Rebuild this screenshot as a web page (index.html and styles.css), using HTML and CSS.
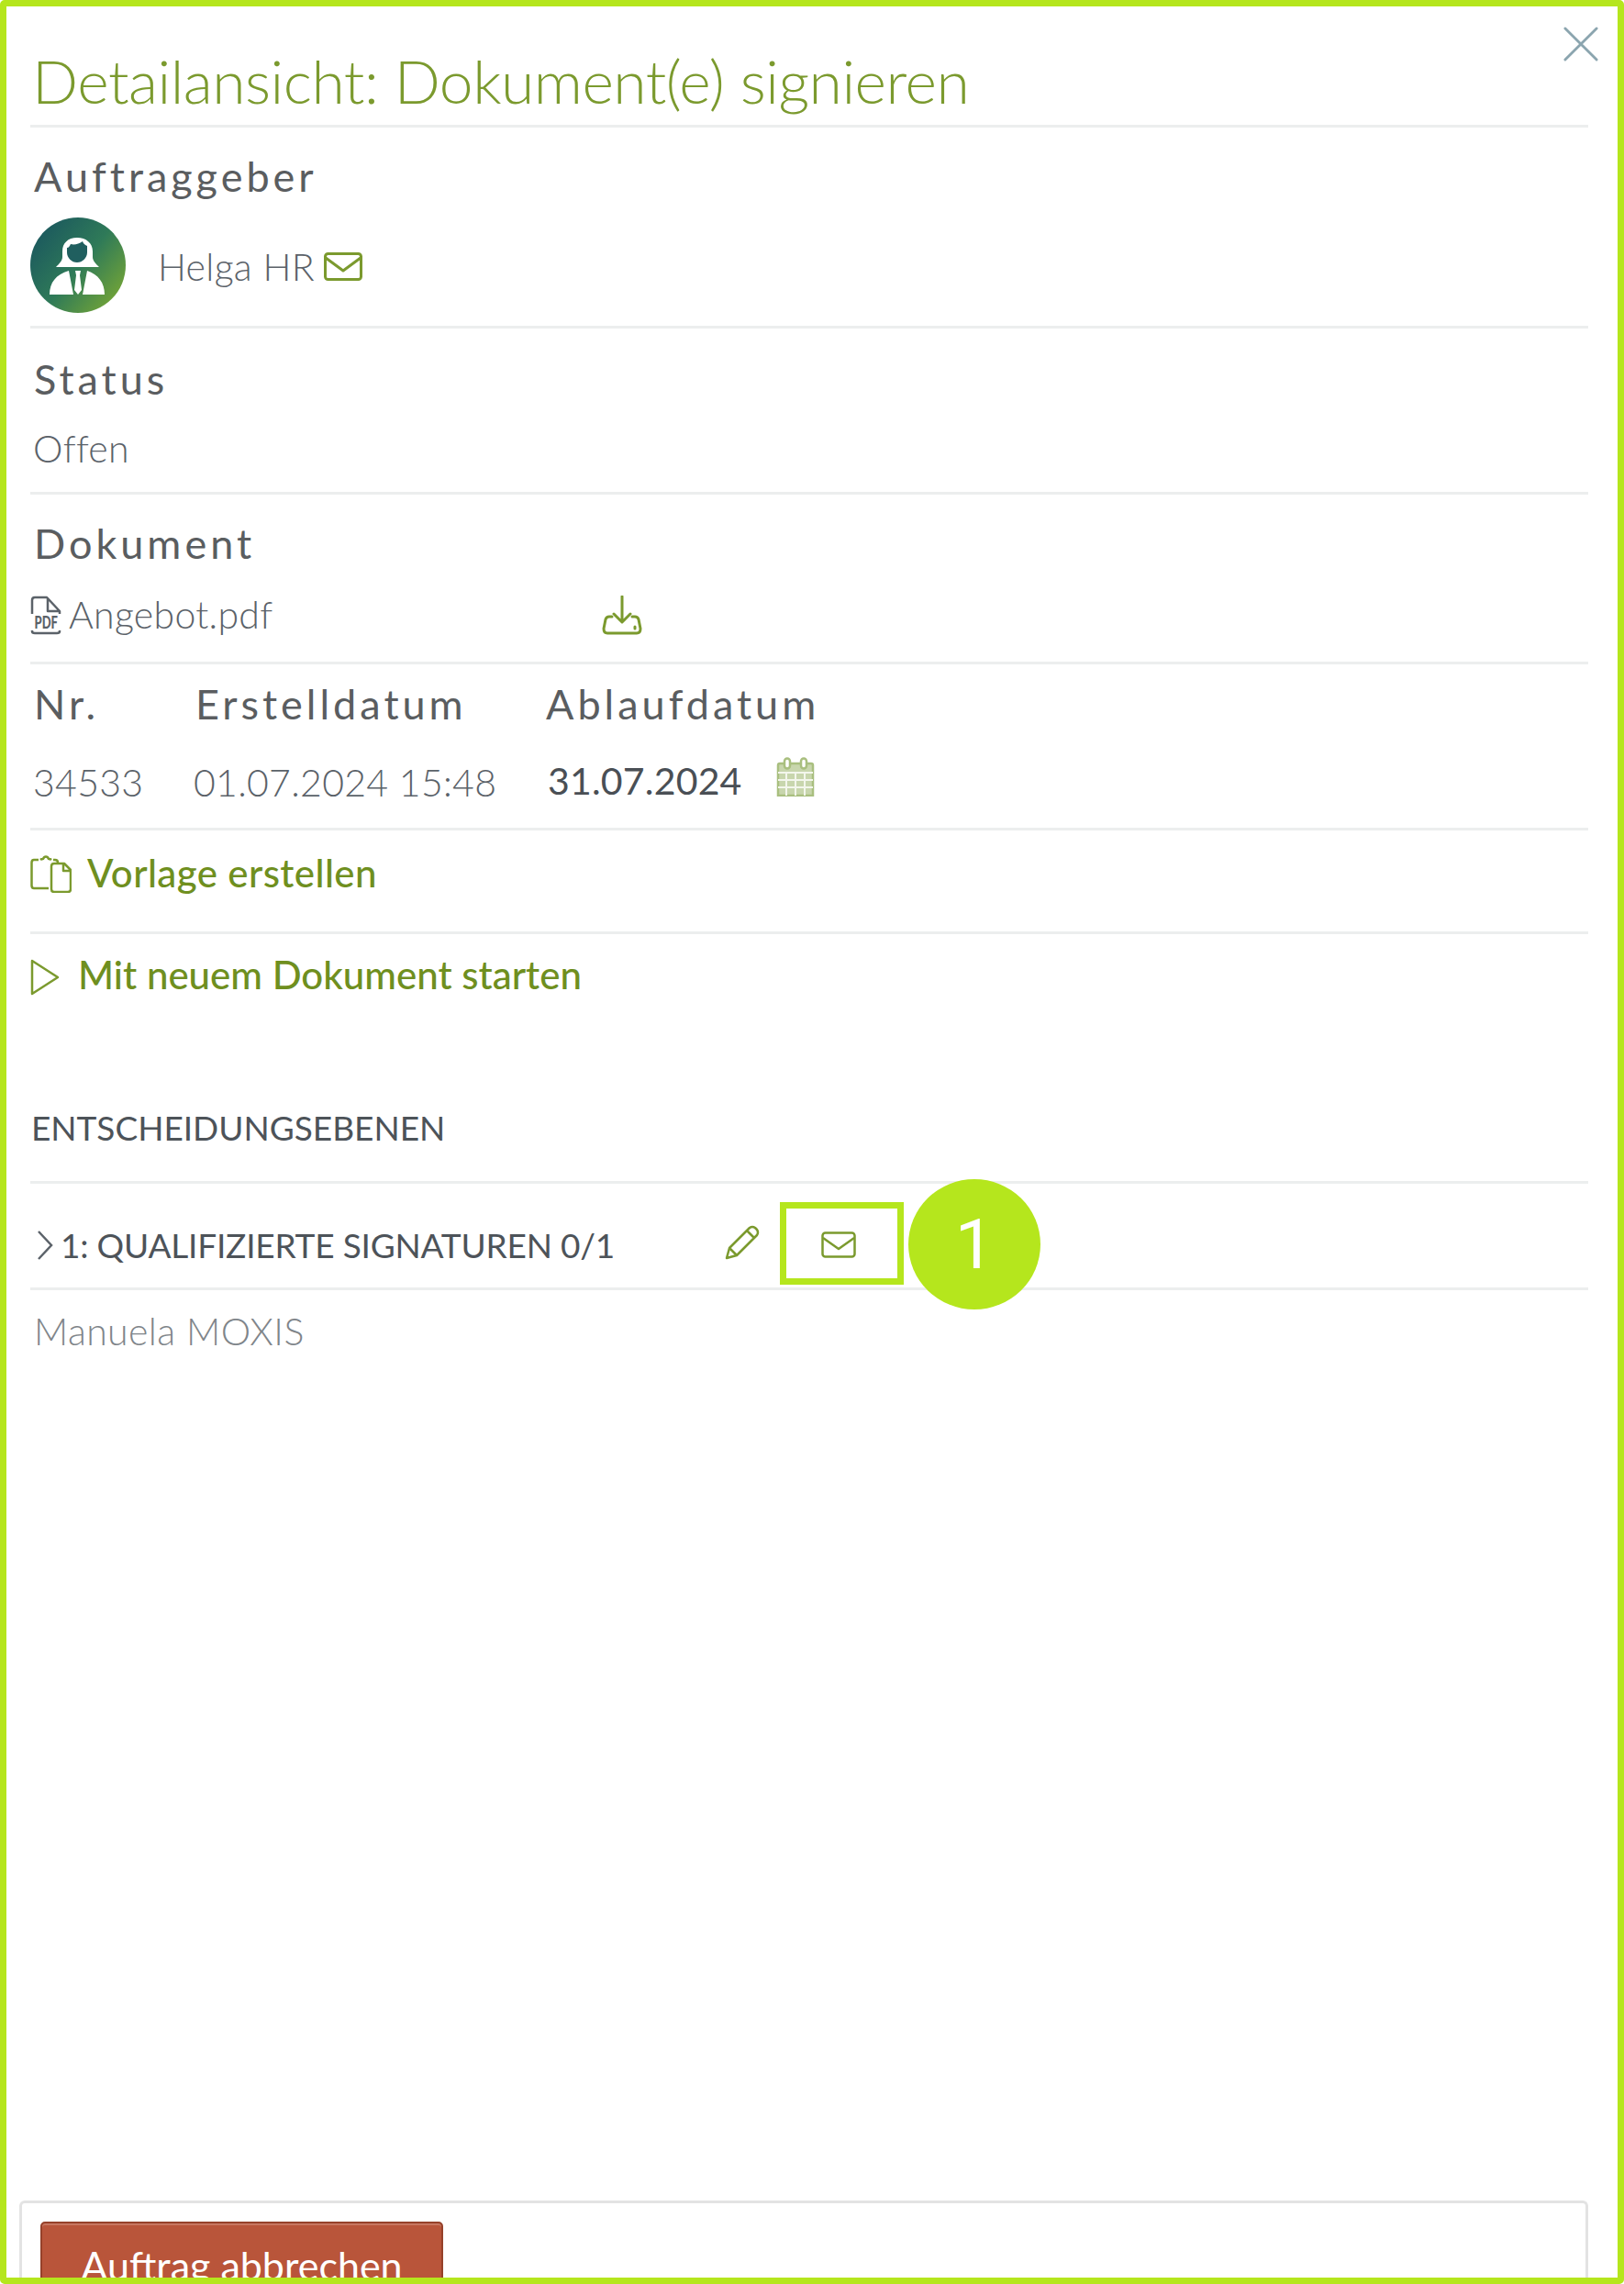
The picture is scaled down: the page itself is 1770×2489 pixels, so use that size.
FILE: index.html
```html
<!DOCTYPE html>
<html lang="de">
<head>
  <meta charset="UTF-8" />
  <title>Detailansicht: Dokument(e) signieren</title>
  <link rel="stylesheet" href="styles.css">
</head>
<body>
  <div class="panel">
    <svg class="close" viewBox="0 0 40 40"><path d="M2 2 38 38M38 2 2 38" /></svg>

    <section class="block title-block">
      <h1>Detailansicht: Dokument(e) signieren</h1>
    </section>

    <section class="block sender">
      <h2 class="label">Auftraggeber</h2>
      <div class="sender-row">
        <svg class="avatar" viewBox="0 0 104 104">
          <defs>
            <linearGradient id="avatarFill" x1="0.1" y1="0.15" x2="0.95" y2="0.85">
              <stop offset="0" stop-color="#1c5a5e" />
              <stop offset="0.5" stop-color="#2f7a58" />
              <stop offset="1" stop-color="#74a536" />
            </linearGradient>
          </defs>
          <circle cx="52" cy="52" r="52" fill="url(#avatarFill)" />
          <path fill="#fff" d="M51 22c-10 0-16 6-16 15v6c0 4-3 7-7 11h47c-4-4-7-7-7-11v-6c0-9-7-15-17-15z" />
          <path fill="#205f5f" d="M44 29c4 1 9 0 13-3 1 3 3 4 5 5v7c0 6-5 11-11 11s-11-5-11-11v-5c2 0 3-2 4-4z" />
          <path fill="#fff" d="M42 58 47 84H21c0-13 7-22 21-26zM62 58 57 84H81c0-13-7-22-19-26zM49 58h6l-1 5 2 16-4 5-4-5 2-16z" />
        </svg>
        <span class="person">Helga HR</span>
        <svg class="mail" viewBox="0 0 42 31"><rect x="1.5" y="1.5" width="39" height="28" rx="3" /><path d="M2 6 21 20 40 6" /></svg>
      </div>
    </section>

    <section class="block status">
      <h2 class="label">Status</h2>
      <p class="value">Offen</p>
    </section>

    <section class="block document">
      <h2 class="label">Dokument</h2>
      <div class="doc-row">
        <svg class="pdf" viewBox="0 0 34 43">
          <path class="pdf-line" d="M2 20V5q0-3 3-3h13l14 15v3M19 3v14h13M2 38v1q0 2 3 2h24q3 0 3-2v-1" />
          <text transform="translate(4.500 36) scale(1 1.4)" class="pdf-text">PDF</text>
        </svg>
        <span class="file">Angebot.pdf</span>
        <svg class="download" viewBox="0 0 44 43"><path d="M22 1V28M13 20l9 9 9-9M11 23H8q-3 0-4 3l-2 10q0 5 4 5h32q4 0 4-5l-2-10q-1-3-4-3h-3M36 34v2" /></svg>
      </div>
    </section>

    <section class="block meta">
      <h2 class="label">Nr.</h2>
      <h2 class="label">Erstelldatum</h2>
      <h2 class="label">Ablaufdatum</h2>
      <p class="value nr">34533</p>
      <p class="value created">01.07.2024 15:48</p>
      <div class="expiry">
        <span class="expiry-date">31.07.2024</span>
        <svg class="calendar" viewBox="0 0 42 43">
          <path class="cal-body" d="M2 9q0-2 2-2h34q2 0 2 2v33H2z" />
          <path class="cal-grid" d="M2 17H40M2 25H40M2 33H40M11 17V42M21 17V42M31 17V42" />
          <rect class="cal-ring" x="9" y="1.500" width="6" height="11" rx="3" />
          <rect class="cal-ring" x="27" y="1.500" width="6" height="11" rx="3" />
        </svg>
      </div>
    </section>

    <section class="block action-template">
      <a class="action">
        <svg class="copy-icon" viewBox="0 0 45 41">
          <path d="M9 5H4Q1.500 5 1.500 8V33q0 3 2.500 3H20M25 5h2q3 0 3 3M11 5q1-1 3-1 1-2.500 3-2.500t3 2.500q2 0 3 1" />
          <path d="M23 12q0-3 3-3H37L44 16V37q0 3-3 3H26q-3 0-3-3zM36 9v8h8" />
        </svg>
        Vorlage erstellen
      </a>
    </section>

    <section class="action-start">
      <a class="action">
        <svg class="play-icon" viewBox="0 0 32 40"><path d="M2 2 30 20 2 38z" /></svg>
        Mit neuem Dokument starten
      </a>
    </section>

    <section class="block levels">
      <h3>ENTSCHEIDUNGSEBENEN</h3>
    </section>

    <section class="block level-row">
      <svg class="chevron" viewBox="0 0 18 32"><path d="M2 1 16 16 2 31" /></svg>
      <span class="level-name">1: QUALIFIZIERTE SIGNATUREN 0/1</span>
      <svg class="pencil" viewBox="0 0 38 38"><path d="M2 36 5 25 27 3q3-2 6 0l2 2q2 3 0 6L13 33zM5 25l8 8M24 6l8 8" /></svg>
      <svg class="mail mail-small" viewBox="0 0 38 29"><rect x="1.500" y="1.500" width="35" height="26" rx="3" /><path d="M2 7 19 19 36 7" /></svg>
    </section>

    <p class="signer">Manuela MOXIS</p>

    <footer class="footer">
      <button class="cancel">Auftrag abbrechen</button>
    </footer>

    <div class="marker-box"></div>
    <div class="marker-badge">1</div>
  </div>
</body>
</html>
```

FILE: styles.css
```css
* { margin: 0; padding: 0; box-sizing: border-box; }
html, body { width: 1770px; height: 2489px; overflow: hidden; background: #fff; }
body { font-family: 'Lato', 'Liberation Sans', sans-serif; color: #4d5359; }

.panel {
  position: relative; display: flex; flex-direction: column;
  width: 1770px; height: 2489px; padding: 0 32px 0 26px;
  border: 7px solid #b5e61d; border-radius: 5px; overflow: hidden; background: #fff;
}
.block { border-bottom: 3px solid #eceeee; flex-shrink: 0; }

.close { position: absolute; top: 21px; right: 21px; width: 38px; height: 40px; fill: none; stroke: #8ba5af; stroke-width: 3; stroke-linecap: round; }

.title-block { height: 132px; padding: 46px 0 0 2px; }
h1 { font-size: 66px; line-height: 70px; font-weight: 300; color: #7b9a2e; white-space: nowrap; letter-spacing: -0.5px; }

.label { font-size: 45px; line-height: 50px; font-weight: 400; color: #5a5d60; letter-spacing: 4px; padding-left: 4px; white-space: nowrap; }
.value { font-size: 41px; line-height: 50px; font-weight: 300; letter-spacing: 0.3px; color: #5b6269; white-space: nowrap; }

.sender { padding: 28px 0 14px; }
.sender-row { display: flex; align-items: center; margin-top: 20px; }
.avatar { width: 104px; height: 104px; }
.person { font-size: 41px; line-height: 50px; font-weight: 300; letter-spacing: 0.3px; color: #5b6269; margin: 3px 0 0 35px; }
.mail { fill: none; stroke: #7b9a2e; stroke-width: 3; stroke-linejoin: round; width: 42px; height: 31px; margin: 2px 0 0 10px; }

.status { padding: 30px 0 22px; }
.status .value { margin-top: 26px; padding-left: 3px; }

.document { padding: 28px 0 27px; }
.doc-row { display: flex; align-items: center; margin-top: 27px; height: 50px; }
.pdf { width: 34px; height: 43px; margin-top: 3px; flex-shrink: 0; }
.pdf-line { fill: none; stroke: #5b6269; stroke-width: 2.500; stroke-linejoin: round; }
.pdf-text { font-size: 13px; font-weight: 900; fill: #5b6269; }
.file { font-size: 41px; font-weight: 300; letter-spacing: 0.3px; color: #5b6269; margin-left: 8px; width: 581px; white-space: nowrap; }
.download { width: 44px; height: 43px; fill: none; stroke: #7b9a2e; stroke-width: 3; stroke-linejoin: round; stroke-linecap: round; margin-top: 3px; }

.meta { display: grid; grid-template-columns: 176px 382px auto; padding: 18px 0 24px; row-gap: 36px; }
.nr { padding-left: 3px; }
.created { padding-left: 2px; }
.expiry { display: flex; align-items: center; height: 44px; padding-left: 6px; }
.expiry-date { font-size: 41px; font-weight: 400; letter-spacing: 0.2px; color: #4a4f55; white-space: nowrap; }
.calendar { width: 42px; height: 43px; margin: -7px 0 0 37px; flex-shrink: 0; }
.cal-body { fill: #c8d6ad; stroke: #a9bf7f; stroke-width: 2.500; }
.cal-grid { fill: none; stroke: #f3f6ec; stroke-width: 2; }
.cal-ring { fill: #fff; stroke: #a9bf7f; stroke-width: 2.500; }

.action { display: flex; align-items: center; font-size: 42px; line-height: 50px; font-weight: 500; color: #6f8f1f; white-space: nowrap; }
.action-template { padding: 21px 0 39px; }
.action-template .action { letter-spacing: 0.4px; }
.action-start { padding: 19px 0 0; }
.copy-icon { width: 45px; height: 41px; margin: 2px 17px 0 0; fill: none; stroke: #7b9a2e; stroke-width: 2.500; stroke-linejoin: round; }
.play-icon { width: 32px; height: 40px; margin: 6px 20px 0 0; fill: none; stroke: #7b9a2e; stroke-width: 2.500; stroke-linejoin: round; }

.levels { padding: 122px 0 38px 1px; }
h3 { font-size: 37px; line-height: 40px; font-weight: 400; color: #4d5359; white-space: nowrap; }

.level-row { display: flex; align-items: center; height: 116px; padding: 47px 0 27px 7px; }
.chevron { width: 18px; height: 32px; fill: none; stroke: #5b6269; stroke-width: 2.500; flex-shrink: 0; }
.level-name { font-size: 37px; line-height: 40px; letter-spacing: -0.2px; color: #4d5359; margin-left: 8px; width: 724px; white-space: nowrap; flex-shrink: 0; }
.pencil { width: 38px; height: 38px; fill: none; stroke: #7b9a2e; stroke-width: 2.500; stroke-linejoin: round; margin-bottom: 6px; flex-shrink: 0; }
.mail-small { width: 38px; height: 29px; margin: 0 0 0 67px; flex-shrink: 0; stroke-width: 2.500; }

.signer { padding: 20px 0 0 4px; font-size: 41px; line-height: 50px; font-weight: 300; letter-spacing: 0.4px; color: #7f858a; white-space: nowrap; }

.footer { margin: auto 0 0 -12px; height: 84px; flex-shrink: 0; padding: 20px 0 0 20px; border: 3px solid #e3e3e3; border-bottom: 0; border-radius: 6px 6px 0 0; overflow: hidden; }
.cancel {
  display: block; width: 439px; height: 75px; padding-top: 21px;
  background: #b9553a; border: 2px solid #96412a; border-radius: 5px;
  box-shadow: inset 0 2px 0 rgba(255, 255, 255, 0.2);
  font-family: 'Lato', sans-serif; font-size: 43px; line-height: 50px; color: #fff; text-align: center; white-space: nowrap;
}

.marker-box { position: absolute; left: 843px; top: 1303px; width: 135px; height: 90px; border: 7px solid #b5e61d; }
.marker-badge {
  position: absolute; left: 983px; top: 1278px; width: 144px; height: 142px;
  border-radius: 50%; background: #b5e61d; color: #fff; text-align: center;
  font-family: 'Roboto', sans-serif; font-size: 76px; line-height: 142px;
}
```
